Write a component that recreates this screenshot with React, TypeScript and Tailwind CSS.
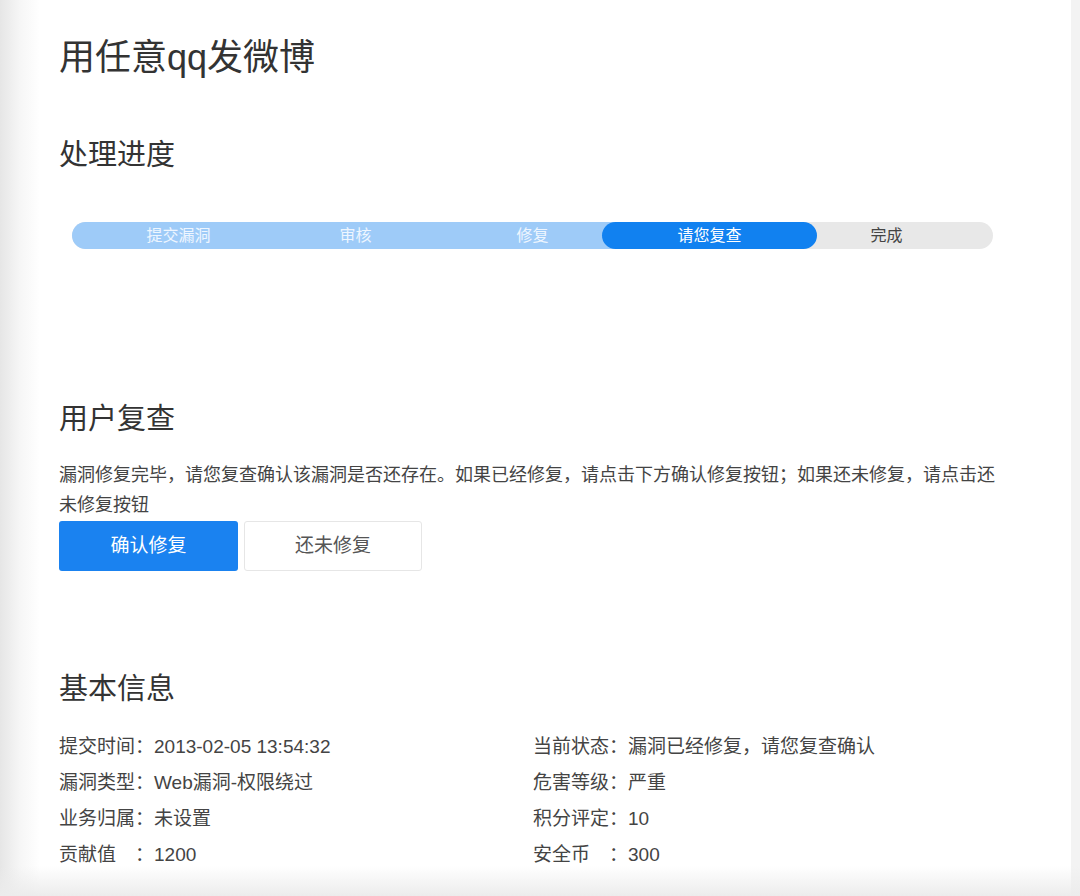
import React from 'react';

const FONT = '"Liberation Sans", "Noto Sans CJK SC", sans-serif';

const steps = ['提交漏洞', '审核', '修复', '请您复查', '完成'];
const ACTIVE = 3;

const info: [string, string][] = [
  ['提交时间：', '2013-02-05 13:54:32'],
  ['当前状态：', '漏洞已经修复，请您复查确认'],
  ['漏洞类型：', 'Web漏洞-权限绕过'],
  ['危害等级：', '严重'],
  ['业务归属：', '未设置'],
  ['积分评定：', '10'],
  ['贡献值　：', '1200'],
  ['安全币　：', '300'],
];

function Progress() {
  return (
    <div className="relative ml-[13px] flex h-[27px] w-[921px] rounded-full bg-[#e8e8e8] px-[18px]">
      <div className="absolute inset-y-0 left-0 w-[560px] rounded-l-full bg-[#9ecbf8]" />
      {steps.map((s, i) => (
        <div key={s} className="relative flex w-[177px] items-center justify-center">
          {i === ACTIVE && <div className="absolute inset-y-0 -left-[19px] -right-[19px] rounded-full bg-[#1181f0]" />}
          <span
            className={
              'relative text-[16px] ' +
              (i === ACTIVE ? 'text-white' : i < ACTIVE ? 'text-[#eef6ff]' : 'text-[#444]')
            }
          >
            {s}
          </span>
        </div>
      ))}
    </div>
  );
}

export default function App() {
  return (
    <div className="relative flex h-[896px] w-[1080px] overflow-hidden bg-white" style={{ fontFamily: FONT }}>
      <div className="w-[40px] shrink-0 bg-gradient-to-r from-[#e6e6e6] via-[#f6f6f6] to-white" />
      <div className="flex-1 pl-[19px] pt-[31px] text-[#333]">
        <h1 className="text-[36px] leading-[54px] text-[#333]">用任意qq发微博</h1>

        <h2 className="mt-[50px] text-[29px] leading-[40px]">处理进度</h2>
        <div className="mt-[47px]">
          <Progress />
        </div>

        <h2 className="mt-[150px] text-[29px] leading-[40px]">用户复查</h2>
        <p className="mt-[21px] w-[945px] text-[18px] leading-[30px] text-[#444]">
          漏洞修复完毕，请您复查确认该漏洞是否还存在。如果已经修复，请点击下方确认修复按钮；如果还未修复，请点击还未修复按钮
        </p>
        <div className="mt-[1px] flex gap-[6px]">
          <button className="h-[50px] w-[179px] rounded-[3px] bg-[#1a82f0] text-[19px] text-white">确认修复</button>
          <button className="h-[50px] w-[178px] rounded-[3px] border border-[#e6e6e6] bg-white text-[19px] text-[#555]">
            还未修复
          </button>
        </div>

        <h2 className="mt-[98px] text-[29px] leading-[40px]">基本信息</h2>
        <div className="mt-[20px] grid grid-cols-[474px_1fr] text-[19px] leading-[36px] text-[#444]">
          {info.map(([k, v]) => (
            <div key={k} className="flex">
              <span>{k}</span>
              <span>{v}</span>
            </div>
          ))}
        </div>
      </div>
      <div className="w-[9px] shrink-0 bg-[#f3f3f3]" />
      <div className="pointer-events-none absolute inset-x-0 bottom-0 h-[30px] bg-gradient-to-b from-transparent to-[#ececec]" />
    </div>
  );
}
